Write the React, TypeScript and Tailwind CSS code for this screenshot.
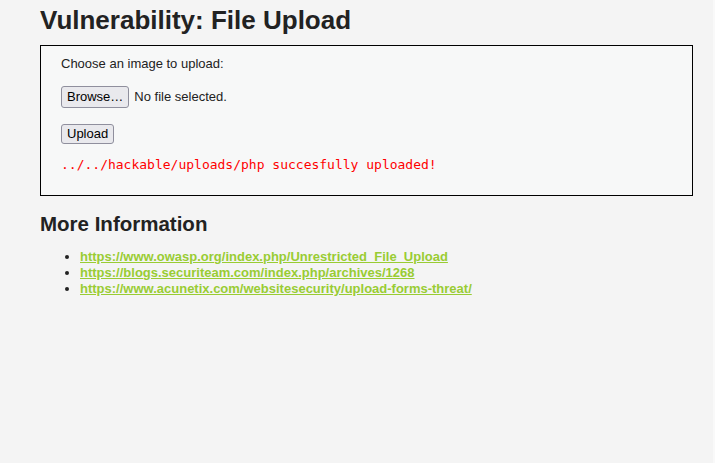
import React from "react";

export default function App() {
  const links = [
    "https://www.owasp.org/index.php/Unrestricted_File_Upload",
    "https://blogs.securiteam.com/index.php/archives/1268",
    "https://www.acunetix.com/websitesecurity/upload-forms-threat/",
  ];
  return (
    <div className="flex h-[463px] w-[715px] bg-[#f4f4f4] text-[#222]" style={{ fontFamily: '"Liberation Sans", Arial, sans-serif' }}>
      <div className="flex-1 pl-10 pr-5">
        <h1 className="pt-[5px] text-[26px] font-bold leading-[30px] text-[#222]">Vulnerability: File Upload</h1>
        <div className="mt-[10px] h-[151px] border border-black bg-[#f7f8f8] pl-5 pt-[10px]">
          <p className="text-[13px] leading-4">Choose an image to upload:</p>
          <div className="mt-[14px] flex items-center gap-[5px]">
            <span className="flex h-[22px] items-center rounded-[3px] border border-[#8f8f9d] bg-[#e9e9ed] px-[5px] text-[13px] text-black">Browse…</span>
            <span className="text-[13px]">No file selected.</span>
          </div>
          <div className="mt-[13px]">
            <span className="inline-flex h-[20px] items-center rounded-[3px] border border-[#8f8f9d] bg-[#e9e9ed] px-[5px] text-[13px] text-black">Upload</span>
          </div>
          <pre className="mt-[12px] text-[13px] leading-4 text-[#ff0000]" style={{ fontFamily: '"DejaVu Sans Mono", monospace' }}>../../hackable/uploads/php succesfully uploaded!</pre>
        </div>
        <h2 className="mt-4 text-[20.5px] font-bold leading-6 text-[#222]">More Information</h2>
        <ul className="mt-[13px] list-disc pl-10 text-[13px] leading-4">
          {links.map((l) => (
            <li key={l}>
              <a href="#" className="font-bold text-[#99cc33] underline">{l}</a>
            </li>
          ))}
        </ul>
      </div>
      <div className="w-[2px] bg-[#f9f9f9]" />
    </div>
  );
}
